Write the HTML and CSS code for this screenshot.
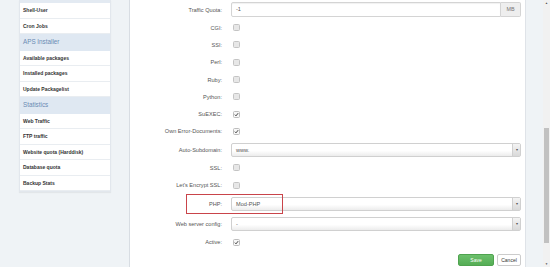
FILE: index.html
```html
<!DOCTYPE html>
<html lang="en">
<head>
    <meta charset="UTF-8">
    <title>Edit Website</title>
    <link rel="stylesheet" href="styles.css">
</head>
<body>
    <div class="sidebar">
        <ul class="menu">
            <li class="menu-cut"></li>
            <li class="menu-item">Shell-User</li>
            <li class="menu-item">Cron Jobs</li>
            <li class="menu-head">APS Installer</li>
            <li class="menu-item">Available packages</li>
            <li class="menu-item">Installed packages</li>
            <li class="menu-item">Update Packagelist</li>
            <li class="menu-head">Statistics</li>
            <li class="menu-item">Web Traffic</li>
            <li class="menu-item">FTP traffic</li>
            <li class="menu-item">Website quota (Harddisk)</li>
            <li class="menu-item">Database quota</li>
            <li class="menu-item">Backup Stats</li>
        </ul>
    </div>

    <div class="main">
        <div class="row row-input first">
            <label>Traffic Quota:</label>
            <div class="input-group">
                <div class="text-input">-1</div>
                <div class="addon">MB</div>
            </div>
        </div>
        <div class="row"><label>CGI:</label><span class="check"></span></div>
        <div class="row"><label>SSI:</label><span class="check"></span></div>
        <div class="row"><label>Perl:</label><span class="check"></span></div>
        <div class="row"><label>Ruby:</label><span class="check"></span></div>
        <div class="row"><label>Python:</label><span class="check"></span></div>
        <div class="row"><label>SuEXEC:</label><span class="check on"><svg viewBox="0 0 6 6"><path d="M1 3.2 L2.4 4.6 L5 1.4" fill="none" stroke="#333" stroke-width="1.1"/></svg></span></div>
        <div class="row"><label>Own Error-Documents:</label><span class="check on"><svg viewBox="0 0 6 6"><path d="M1 3.2 L2.4 4.6 L5 1.4" fill="none" stroke="#333" stroke-width="1.1"/></svg></span></div>
        <div class="row row-input">
            <label>Auto-Subdomain:</label>
            <div class="select"><span class="value">www.</span><span class="arrow">&#9662;</span></div>
        </div>
        <div class="row"><label>SSL:</label><span class="check"></span></div>
        <div class="row"><label>Let's Encrypt SSL:</label><span class="check"></span></div>
        <div class="row row-input row-php">
            <label>PHP:</label>
            <div class="select"><span class="value">Mod-PHP</span><span class="arrow">&#9662;</span></div>
            <div class="highlight"></div>
        </div>
        <div class="row row-input">
            <label>Web server config:</label>
            <div class="select"><span class="value">-</span><span class="arrow">&#9662;</span></div>
        </div>
        <div class="row"><label>Active:</label><span class="check on"><svg viewBox="0 0 6 6"><path d="M1 3.2 L2.4 4.6 L5 1.4" fill="none" stroke="#333" stroke-width="1.1"/></svg></span></div>
        <div class="buttons">
            <button class="btn btn-save">Save</button>
            <button class="btn btn-cancel">Cancel</button>
        </div>
    </div>

    <div class="gutter"></div>
    <div class="scrollbar">
        <span class="sb-arrow">&#9650;</span>
        <div class="sb-track"><div class="sb-thumb"></div></div>
        <span class="sb-arrow">&#9660;</span>
    </div>
</body>
</html>
```

FILE: styles.css
```css
html, body {
    margin: 0;
    padding: 0;
    height: 267px;
    overflow: hidden;
}
body {
    display: flex;
    flex-direction: row;
    background-color: #eff3f6;
    font-family: 'Liberation Sans', Arial, sans-serif;
    color: #555555;
}

/* sidebar */
.sidebar {
    width: 129px;
    padding-left: 19px;
    box-sizing: border-box;
}
.menu {
    list-style: none;
    margin: 0;
    padding: 0;
    width: 90px;
    background-color: #ffffff;
    border: 1px solid #e2e7ed;
    border-top: none;
    box-shadow: 0 1px 1px rgba(0, 0, 0, 0.05);
}
.menu-cut {
    height: 3px;
    background-color: #e3eaf2;
}
.menu-item {
    height: 15.5px;
    line-height: 15px;
    padding-left: 3px;
    font-size: 5px;
    font-weight: bold;
    color: #333333;
    border-bottom: 1px solid #e9edf1;
    box-sizing: border-box;
}
.menu-head {
    height: 16.5px;
    line-height: 16px;
    padding-left: 3px;
    font-size: 6.3px;
    color: #6a8bb2;
    background-color: #dfe8f2;
    box-sizing: border-box;
}

/* form area */
.main {
    width: 397px;
    background-color: #ffffff;
    border-left: 1px solid #d8dde3;
    border-right: 1px solid #dfe3e8;
    border-top: 1px solid #e2e2e2;
    box-sizing: border-box;
    padding-right: 4px;
    margin-top: -1px;
}
.row {
    display: grid;
    grid-template-columns: 92px 1fr;
    column-gap: 9px;
    align-items: center;
    height: 17.3px;
    position: relative;
}
.row-input {
    height: 19px;
}
.row-input.first {
    height: 19px;
}
.row-php {
    height: 21px;
}
.row label {
    text-align: right;
    font-size: 5.6px;
    color: #555555;
}

.check {
    display: block;
    width: 5px;
    height: 5px;
    margin-left: 2px;
    border: 1px solid #c4c4c4;
    border-radius: 1.5px;
    background-color: #e7e7e7;
}
.check.on {
    background-color: #f7f7f7;
    border-color: #bdbdbd;
}
.check svg {
    display: block;
    width: 5px;
    height: 5px;
}

.input-group {
    display: flex;
    height: 15px;
}
.text-input {
    flex: 1;
    border: 1px solid #d4d4d4;
    border-radius: 2px 0 0 2px;
    box-shadow: inset 0 1px 1px rgba(0, 0, 0, 0.06);
    padding-left: 4px;
    font-size: 5.6px;
    line-height: 13px;
    color: #555555;
}
.addon {
    width: 19px;
    border: 1px solid #d4d4d4;
    border-left: none;
    border-radius: 0 2px 2px 0;
    background-color: #eeeeee;
    font-size: 5.4px;
    line-height: 13px;
    text-align: center;
    color: #777777;
}

.select {
    display: flex;
    height: 14px;
    border: 1px solid #d0d0d0;
    border-radius: 2px;
    background: linear-gradient(#ffffff 55%, #ececec);
    box-sizing: border-box;
}
.select .value {
    flex: 1;
    padding-left: 4px;
    font-size: 5.6px;
    line-height: 12px;
    color: #555555;
}
.select .arrow {
    width: 7px;
    border-left: 1px solid #d0d0d0;
    background: linear-gradient(#f4f4f4, #d9d9d9);
    font-size: 4px;
    line-height: 12px;
    text-align: center;
    color: #555555;
}

.highlight {
    position: absolute;
    left: 56px;
    top: 0;
    width: 97px;
    height: 20px;
    border: 1px solid #c9444a;
    box-sizing: border-box;
}

.buttons {
    display: flex;
    justify-content: flex-end;
    gap: 3px;
    margin-top: 3px;
}
.btn {
    height: 12px;
    padding: 0;
    border-radius: 2px;
    font-family: 'Liberation Sans', Arial, sans-serif;
    font-size: 5px;
    line-height: 10px;
    cursor: pointer;
}
.btn-save {
    width: 36px;
    background: linear-gradient(#6cc06c, #55ad55);
    border: 1px solid #4fa34f;
    color: #ffffff;
}
.btn-cancel {
    width: 24px;
    background-color: #ffffff;
    border: 1px solid #cccccc;
    color: #333333;
}

/* right side */
.gutter {
    width: 17px;
}
.scrollbar {
    width: 7px;
    display: flex;
    flex-direction: column;
    background-color: #f1f1f1;
}
.sb-arrow {
    height: 6px;
    font-size: 3px;
    line-height: 6px;
    text-align: center;
    color: #505050;
}
.sb-track {
    flex: 1;
    padding-top: 122px;
    padding-bottom: 18px;
    display: flex;
    flex-direction: column;
}
.sb-thumb {
    flex: 1;
    margin: 0 1px;
    background-color: #c1c1c1;
}
```
